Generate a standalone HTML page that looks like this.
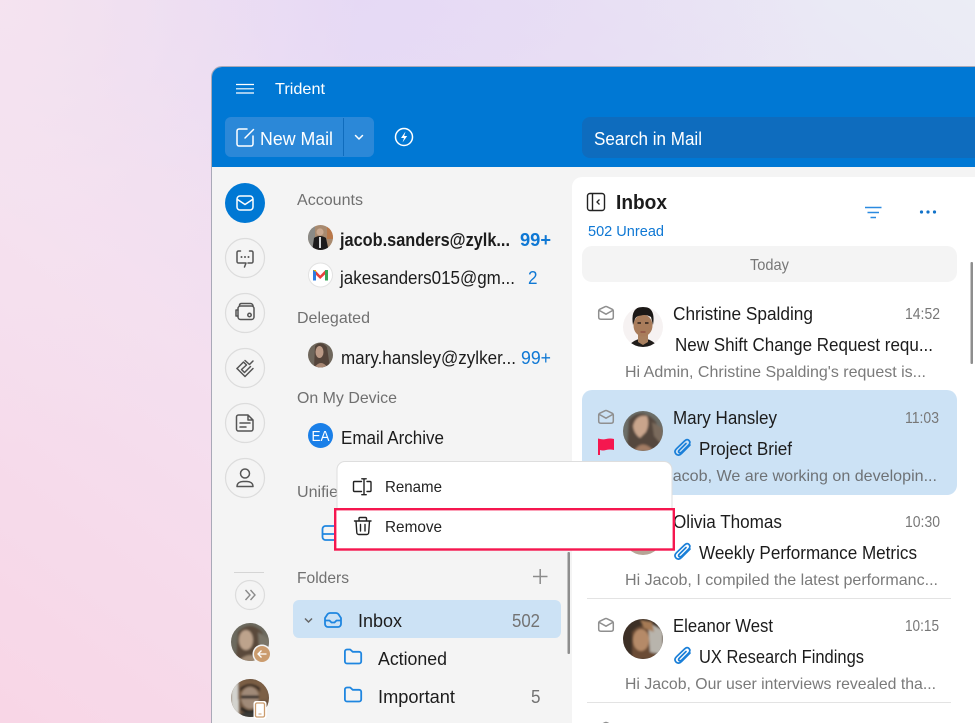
<!DOCTYPE html>
<html lang="en"><head><meta charset="utf-8"><title>Trident</title>
<style>
html,body{margin:0;padding:0;width:975px;height:723px;overflow:hidden;background:#f3e0ee}
svg{display:block}
text{font-family:"Liberation Sans",sans-serif;fill:#1c1c1c;font-size:18px}
.g{fill:#707070;font-size:16px}
.p{fill:#7a7a7a;font-size:16px}
.t{fill:#777;font-size:15.500px}
.b{fill:#0f78d4}
.w{fill:#fff}
.ln{fill:none;stroke:#555;stroke-width:1.500;stroke-linejoin:round;stroke-linecap:round}
.ic{fill:none;stroke:#1f86e0;stroke-width:1.800;stroke-linejoin:round;stroke-linecap:round}
.wh{fill:none;stroke:#fff;stroke-width:1.500;stroke-linejoin:round;stroke-linecap:round}
.k{fill:none;stroke:#222;stroke-width:1.400;stroke-linejoin:round;stroke-linecap:round}
</style></head><body>
<svg xmlns="http://www.w3.org/2000/svg" width="975" height="723" viewBox="0 0 975 723">
<defs>
<linearGradient id="bg" x1="0" y1="1" x2="1" y2="0"><stop offset="0" stop-color="#f8d6e6"/><stop offset=".35" stop-color="#f4dfef"/><stop offset=".62" stop-color="#e8dcf4"/><stop offset="1" stop-color="#ebedf5"/></linearGradient>
<radialGradient id="bg2" cx=".35" cy="0" r=".5"><stop offset="0" stop-color="#e6d9f5"/><stop offset="1" stop-color="#e6d9f5" stop-opacity="0"/></radialGradient>
<radialGradient id="bg3" cx="0" cy="0" r=".9"><stop offset="0" stop-color="#f6e4ef" stop-opacity=".9"/><stop offset="1" stop-color="#f6e4ef" stop-opacity="0"/></radialGradient>
<filter id="bl" x="-30%" y="-30%" width="160%" height="160%"><feGaussianBlur stdDeviation="1"/></filter>
<clipPath id="win"><path d="M212 77a10 10 0 0 1 10-10H975V723H212Z"/></clipPath>
<clipPath id="c1"><circle cx="320.500" cy="237.500" r="12.500"/></clipPath>
<clipPath id="c2"><circle cx="320.500" cy="355" r="12.500"/></clipPath>
<clipPath id="c3"><circle cx="250" cy="642" r="19"/></clipPath>
<clipPath id="c4"><circle cx="250" cy="698" r="19"/></clipPath>
<clipPath id="c5"><circle cx="643" cy="327" r="20"/></clipPath>
<clipPath id="c6"><circle cx="643" cy="431" r="20"/></clipPath>
<clipPath id="c7"><circle cx="643" cy="535" r="20"/></clipPath>
<clipPath id="c8"><circle cx="643" cy="639" r="20"/></clipPath>
<g id="env"><path d="M.7 5.200Q.7 3.900 1.900 3.200L6.600 .9Q8 .2 9.400 .9L14.100 3.200Q15.300 3.900 15.300 5.200V11Q15.300 13.200 13.100 13.200H2.900Q.7 13.200 .7 11Z" fill="none" stroke="#8f8f8f" stroke-width="1.500" stroke-linejoin="round"/><path d="M1.200 4.400L8 8.200L14.800 4.400" fill="none" stroke="#8f8f8f" stroke-width="1.500" stroke-linecap="round" stroke-linejoin="round"/></g>
<g id="clip"><path d="M16 6.500L7.500 15Q4.500 18 2 15.500Q-.3 13 2.500 10.200L10.500 2.500Q13 0 15 2Q17 4.200 14.500 6.700L7.500 13.700Q6 15 5 14Q4 13 5.500 11.500L12 5" fill="none" stroke="#1a7fd8" stroke-width="1.700" stroke-linecap="round" stroke-linejoin="round"/></g>
<g id="fold"><path d="M.9 3A2 2 0 0 1 2.900 1H6.200L8.700 3.300H15.200A2 2 0 0 1 17.200 5.300V13A2 2 0 0 1 15.200 15H2.900A2 2 0 0 1 .9 13Z" fill="none" stroke="#1f86e0" stroke-width="1.800" stroke-linejoin="round"/></g>
</defs>

<rect width="975" height="723" fill="url(#bg)"/>
<rect width="975" height="400" fill="url(#bg2)"/>
<rect width="400" height="500" fill="url(#bg3)"/>

<!-- window -->
<path d="M211.500 723V77a10.500 10.500 0 0 1 10.500-10.500H975" fill="none" stroke="#a9a9b8" stroke-width="1"/>
<g clip-path="url(#win)">
<rect x="212" y="67" width="763" height="100" fill="#0078d4"/>
<rect x="212" y="167" width="763" height="556" fill="#f4f4f4"/>
<rect x="572" y="177" width="420" height="560" rx="10" fill="#fff"/>
</g>

<!-- title bar -->
<path d="M236 84.500H254M236 88.800H254M236 93H254" stroke="#fff" stroke-width="1.200" fill="none"/>
<text class="w" x="275" y="94" style="font-size:16px" textLength="50" lengthAdjust="spacingAndGlyphs">Trident</text>

<!-- new mail -->
<rect x="225" y="117" width="149" height="40" rx="6" fill="#2b88d8"/>
<rect x="343" y="118" width="1" height="38" fill="#0f6cbd"/>
<path d="M247 129H239A2 2 0 0 0 237 131V144A2 2 0 0 0 239 146H251A2 2 0 0 0 253 144V136" class="wh"/>
<path d="M245 138L253.500 129.500" class="wh"/>
<text class="w" x="260" y="145" textLength="73" lengthAdjust="spacingAndGlyphs">New Mail</text>
<path d="M355.500 135.500L359 139L362.500 135.500" class="wh" stroke-width="1.300"/>
<circle cx="404" cy="137" r="8.500" class="wh"/>
<path d="M405.500 131.500L401 138H404L402.500 142.500L407.200 136H404.200Z" fill="#fff"/>

<!-- search -->
<path d="M590 117H975V158H590A8 8 0 0 1 582 150V125A8 8 0 0 1 590 117Z" fill="#0e6cbe"/>
<text class="w" x="594" y="145" textLength="108" lengthAdjust="spacingAndGlyphs">Search in Mail</text>

<!-- rail -->
<circle cx="245" cy="203" r="20" fill="#0078d4"/>
<rect x="237" y="196" width="16" height="14" rx="3" class="wh"/>
<path d="M237.500 199.500L245 204.500L252.500 199.500" class="wh"/>
<g fill="none" stroke="#dcdcdc" stroke-width="1.200">
<circle cx="245" cy="258" r="19.500"/><circle cx="245" cy="313" r="19.500"/><circle cx="245" cy="368" r="19.500"/><circle cx="245" cy="423" r="19.500"/><circle cx="245" cy="478" r="19.500"/>
</g>
<path d="M240.500 251H238.500A1.500 1.500 0 0 0 237 252.500V261.500A1.500 1.500 0 0 0 238.500 263H246L244.500 267M249.500 251H251.500A1.500 1.500 0 0 1 253 252.500V261.500A1.500 1.500 0 0 1 251.500 263H248" class="ln"/>
<circle cx="241.500" cy="257" r="1" fill="#555"/><circle cx="245" cy="257" r="1" fill="#555"/><circle cx="248.500" cy="257" r="1" fill="#555"/>
<rect x="238" y="306" width="16" height="13.500" rx="2.500" class="ln"/>
<path d="M239.500 306V305A2 2 0 0 1 241.500 303.500H250.500A2.500 2.500 0 0 1 253 306M238 310H236V316H238" class="ln"/>
<circle cx="249.500" cy="315" r="1.700" class="ln"/>
<path d="M237 368.500L243.500 362L246.500 365L241.500 369.500L244.500 372.500L250.500 366.500" class="ln"/>
<path d="M245 360.500L249.500 364.500L253 361M237 368.500L245 376.500L253 368.500" class="ln"/>
<path d="M238.500 415H248L253 420V429A2 2 0 0 1 251 431H238.500A2 2 0 0 1 236.500 429V417A2 2 0 0 1 238.500 415ZM248 415V420H253M240 423H250M240 427H246" class="ln"/>
<circle cx="245" cy="473.500" r="4.500" class="ln"/>
<path d="M237 486.500C237 483 240 481.500 243 481.500H247C250 481.500 253 483 253 486.500Z" class="ln"/>
<rect x="234" y="572" width="30" height="1" fill="#d5d5d5"/>
<circle cx="250" cy="595" r="14.500" fill="none" stroke="#dcdcdc" stroke-width="1.200"/>
<path d="M245.500 590L250 595L245.500 600M250.500 590L255 595L250.500 600" fill="none" stroke="#8a8a8a" stroke-width="1.400"/>

<!-- rail avatars -->
<g clip-path="url(#c3)"><rect x="230" y="622" width="40" height="40" fill="#6c6a5f"/><g filter="url(#bl)"><path d="M236 662L238 632Q250 620 262 632L268 660Z" fill="#5a4a3a"/><ellipse cx="246" cy="640" rx="7" ry="10" fill="#bda38c"/><path d="M238 662Q250 648 262 662Z" fill="#a08a74"/><path d="M258 632L270 640V662H260Z" fill="#7a7468"/></g></g>
<circle cx="262" cy="654" r="9.500" fill="#f4f4f4"/><circle cx="262" cy="654" r="8" fill="#cb9c6e"/>
<path d="M266.500 654H258M261.500 650.500L258 654L261.500 657.500" fill="none" stroke="#fff" stroke-width="1.300"/>
<g clip-path="url(#c4)"><rect x="230" y="678" width="40" height="40" fill="#6e5540"/><g filter="url(#bl)"><rect x="231" y="680" width="8" height="38" fill="#d3d3ce"/><path d="M238 680H268V700H238Z" fill="#7c5f44"/><ellipse cx="250" cy="698" rx="9" ry="11" fill="#a08a78"/><path d="M240 692Q250 680 260 692V688Q250 680 240 688Z" fill="#2d2620"/><path d="M241 697H259M241 708Q250 716 259 708" stroke="#2a2520" stroke-width="3" fill="none"/><path d="M234 718Q250 706 266 718Z" fill="#3a3a38"/></g></g>
<rect x="253.500" y="701" width="13" height="18" rx="2.500" fill="#fff"/>
<rect x="255.500" y="703" width="9" height="14" rx="1.500" fill="#fff" stroke="#cb9c6e" stroke-width="1.300"/>
<path d="M258.500 714H261.500" stroke="#cb9c6e" stroke-width="1"/>

<!-- accounts -->
<text class="g" x="297" y="205" textLength="66" lengthAdjust="spacingAndGlyphs">Accounts</text>
<g clip-path="url(#c1)"><rect x="306" y="224" width="30" height="28" fill="#a88a6f"/><rect x="306" y="224" width="9" height="28" fill="#8a8a86"/><rect x="327" y="224" width="9" height="15" fill="#b9784a"/><circle cx="320" cy="232" r="3.600" fill="#c9a88f"/><path d="M312 252L314 238Q320 234 326 238L329 252Z" fill="#1d1b1b"/><path d="M319 237H321L321 248H319Z" fill="#d8d8d8"/></g>
<text x="340" y="246" font-weight="700" textLength="170" lengthAdjust="spacingAndGlyphs">jacob.sanders@zylk...</text>
<text class="b" x="520" y="246" font-weight="700" textLength="31" lengthAdjust="spacingAndGlyphs">99+</text>
<circle cx="320.500" cy="275" r="12" fill="#fff" stroke="#e2e2e2"/>
<path d="M315 270L320.200 275.500L325.500 270V274L320.200 279L315 274Z" fill="#e8413a"/>
<rect x="313" y="270" width="3" height="10.500" fill="#2f7de1"/><rect x="325" y="270" width="3" height="10.500" fill="#3aa757"/><path d="M313 270H316V272L313 270Z" fill="#f2b500"/>
<text x="340" y="284" textLength="175" lengthAdjust="spacingAndGlyphs">jakesanders015@gm...</text>
<text class="b" x="528" y="284" textLength="9.500" lengthAdjust="spacingAndGlyphs">2</text>

<text class="g" x="297" y="323" textLength="73" lengthAdjust="spacingAndGlyphs">Delegated</text>
<g clip-path="url(#c2)"><rect x="306" y="342" width="30" height="26" fill="#6f675c"/><path d="M314 368L315 346Q321 340 327 347L330 368Z" fill="#54443a"/><ellipse cx="319.500" cy="352" rx="4" ry="6" fill="#bb9a86"/><path d="M314 368Q321 358 328 368Z" fill="#a88773"/></g>
<text x="341" y="364" textLength="175" lengthAdjust="spacingAndGlyphs">mary.hansley@zylker...</text>
<text class="b" x="521" y="364" textLength="30" lengthAdjust="spacingAndGlyphs">99+</text>

<text class="g" x="297" y="403" textLength="100" lengthAdjust="spacingAndGlyphs">On My Device</text>
<circle cx="320.500" cy="435.500" r="12.500" fill="#1a7fe8"/>
<text class="w" x="311.500" y="441" style="font-size:15px" textLength="18" lengthAdjust="spacingAndGlyphs">EA</text>
<text x="341" y="444" textLength="103" lengthAdjust="spacingAndGlyphs">Email Archive</text>

<text class="g" x="297" y="497" textLength="50" lengthAdjust="spacingAndGlyphs">Unified</text>
<path d="M322.500 535V529A3 3 0 0 1 325.500 526H345V540H325.500A3 3 0 0 1 322.500 537ZM322.500 534H345" class="ic"/>

<text class="g" x="297" y="583" textLength="52" lengthAdjust="spacingAndGlyphs">Folders</text>
<path d="M533 576.500H547.500M540.200 569V584" stroke="#8c8c8c" stroke-width="1.500" fill="none"/>
<rect x="567.500" y="552" width="2.500" height="102" rx="1" fill="#8e8e8e"/>

<rect x="293" y="600" width="268" height="38" rx="6" fill="#cce2f5"/>
<path d="M305 618.500L308.500 622L312 618.500" fill="none" stroke="#666" stroke-width="1.500"/>
<path d="M325 618V624A3 3 0 0 0 328 627H338A3 3 0 0 0 341 624V618L339 615A3.500 3.500 0 0 0 336 613H330A3.500 3.500 0 0 0 327 615ZM325 620.500H329.500L331.500 622.500H334.500L336.500 620.500H341" class="ic"/>
<text x="358" y="627" textLength="44" lengthAdjust="spacingAndGlyphs">Inbox</text>
<text x="512" y="627" style="fill:#737373" textLength="28" lengthAdjust="spacingAndGlyphs">502</text>
<use href="#fold" x="344" y="648.500"/>
<text x="378" y="665" textLength="69" lengthAdjust="spacingAndGlyphs">Actioned</text>
<use href="#fold" x="344" y="686.500"/>
<text x="378" y="703" textLength="77" lengthAdjust="spacingAndGlyphs">Important</text>
<text x="531" y="703" style="fill:#737373" textLength="9.500" lengthAdjust="spacingAndGlyphs">5</text>

<!-- inbox panel -->
<rect x="587.500" y="193.500" width="17" height="17" rx="2.500" fill="none" stroke="#222" stroke-width="1.400"/>
<path d="M592.500 193.500V210.500" stroke="#222" stroke-width="1.400"/>
<path d="M599.500 199.500L597 202L599.500 204.500" fill="none" stroke="#222" stroke-width="1.300"/>
<text x="616" y="209" font-weight="700" style="font-size:20px" textLength="51" lengthAdjust="spacingAndGlyphs">Inbox</text>
<text class="b" x="588" y="236" style="font-size:15px;fill:#0f78d4" textLength="76" lengthAdjust="spacingAndGlyphs">502 Unread</text>
<path d="M865 207.500H881.500M867.500 212.500H879M870.500 217.500H876" stroke="#2b8ae0" stroke-width="1.600" fill="none"/>
<circle cx="921.500" cy="212" r="1.600" fill="#1373c9"/><circle cx="928" cy="212" r="1.600" fill="#1373c9"/><circle cx="934.500" cy="212" r="1.600" fill="#1373c9"/>
<rect x="582" y="246" width="375" height="36" rx="10" fill="#f4f4f4"/>
<text class="t" x="750" y="270" style="font-size:16px" textLength="39" lengthAdjust="spacingAndGlyphs">Today</text>
<rect x="970.500" y="262" width="2.500" height="102" rx="1" fill="#8e8e8e"/>

<!-- message 1 -->
<use href="#env" x="598" y="306"/>
<circle cx="643" cy="327" r="20" fill="#f6f2f2"/>
<g clip-path="url(#c5)"><path d="M627 347Q634 340 639 339L647 339Q652 340 659 347Z" fill="#201c1a"/><path d="M638 334H648V342L643 345L638 342Z" fill="#a9805f"/><ellipse cx="643" cy="325.500" rx="9.500" ry="11" fill="#a97c5b"/><path d="M633 325Q630 307 643 306.500Q656 307 653 325L651 317Q646 314 641 315.500Q636 316 635 319Z" fill="#1c1816"/><path d="M637.500 323H641M645 323H648.500" stroke="#2a1f1a" stroke-width="1.500"/><path d="M640.500 332H645.500" stroke="#8c4a40" stroke-width="1.300"/></g>
<text x="673" y="320" textLength="140" lengthAdjust="spacingAndGlyphs">Christine Spalding</text>
<text class="t" x="905" y="319" textLength="35" lengthAdjust="spacingAndGlyphs">14:52</text>
<text x="675" y="351" textLength="258" lengthAdjust="spacingAndGlyphs">New Shift Change Request requ...</text>
<text class="p" x="625" y="377" textLength="301" lengthAdjust="spacingAndGlyphs">Hi Admin, Christine Spalding's request is...</text>

<!-- message 2 -->
<rect x="582" y="390" width="375" height="105" rx="10" fill="#cce2f5"/>
<use href="#env" x="598" y="410"/>
<path d="M598 438.500Q603 440 606 439Q610 438 614 439V450Q610 449 606 450Q603 451 600 450V455H598Z" fill="#f5174f"/>
<g clip-path="url(#c6)"><rect x="623" y="411" width="40" height="40" fill="#6c6e68"/><g filter="url(#bl)"><path d="M627 451L629 420Q642 406 656 422L662 451Z" fill="#54463c"/><path d="M633 426Q636 414 647 416Q650 424 646 432L640 438Q634 434 633 426Z" fill="#c9a58c"/><path d="M634 451Q642 438 654 451Z" fill="#a27c63"/><path d="M652 422L662 428V445L654 436Z" fill="#7a6a5c"/></g></g>
<text x="673" y="424" textLength="104" lengthAdjust="spacingAndGlyphs">Mary Hansley</text>
<text class="t" x="905" y="423" textLength="34" lengthAdjust="spacingAndGlyphs">11:03</text>
<use href="#clip" x="674" y="438.500"/>
<text x="699" y="455" textLength="93" lengthAdjust="spacingAndGlyphs">Project Brief</text>
<text class="p" x="645" y="481" style="fill:#6e7276" textLength="292" lengthAdjust="spacingAndGlyphs">Hi Jacob, We are working on developin...</text>

<!-- message 3 -->
<use href="#env" x="598" y="514"/>
<g clip-path="url(#c7)"><rect x="623" y="515" width="40" height="40" fill="#b6a596"/></g>
<text x="673" y="528" textLength="109" lengthAdjust="spacingAndGlyphs">Olivia Thomas</text>
<text class="t" x="905" y="527" textLength="35" lengthAdjust="spacingAndGlyphs">10:30</text>
<use href="#clip" x="674" y="542.500"/>
<text x="699" y="559" textLength="218" lengthAdjust="spacingAndGlyphs">Weekly Performance Metrics</text>
<text class="p" x="625" y="585" textLength="313" lengthAdjust="spacingAndGlyphs">Hi Jacob, I compiled the latest performanc...</text>
<rect x="587" y="598" width="364" height="1" fill="#e3e3e3"/>

<!-- message 4 -->
<use href="#env" x="598" y="618"/>
<g clip-path="url(#c8)"><rect x="623" y="619" width="40" height="40" fill="#3d3026"/><g filter="url(#bl)"><path d="M632 659L632 632Q640 622 652 628L656 659Z" fill="#6a4c35"/><ellipse cx="641" cy="640" rx="8" ry="11" fill="#b58a68"/><path d="M648 622L663 630V655L650 652Z" fill="#b8b4ac"/><path d="M640 620L652 622L654 632L644 628Z" fill="#a57a55"/></g></g>
<text x="673" y="632" textLength="100" lengthAdjust="spacingAndGlyphs">Eleanor West</text>
<text class="t" x="905" y="631" textLength="34" lengthAdjust="spacingAndGlyphs">10:15</text>
<use href="#clip" x="674" y="646.500"/>
<text x="699" y="663" textLength="165" lengthAdjust="spacingAndGlyphs">UX Research Findings</text>
<text class="p" x="625" y="689" textLength="311" lengthAdjust="spacingAndGlyphs">Hi Jacob, Our user interviews revealed tha...</text>
<rect x="587" y="702" width="364" height="1" fill="#e3e3e3"/>
<!-- message 5 peek -->
<use href="#env" x="598" y="722"/>

<!-- context menu -->
<rect x="337" y="461.500" width="335" height="88" rx="8" fill="#fff" stroke="#dedede" stroke-width="1"/>
<path d="M361.500 481.500H354.500A1 1 0 0 0 353.500 482.500V490.500A1 1 0 0 0 354.500 491.500H361.500M367 481.500H370A1 1 0 0 1 371 482.500V490.500A1 1 0 0 1 370 491.500H367M364 479V494.500M361.800 478.800H366.200M361.800 494.700H366.200" class="k"/>
<text x="385" y="492" style="font-size:16px;fill:#222" textLength="57" lengthAdjust="spacingAndGlyphs">Rename</text>
<rect x="335.200" y="509.200" width="338.600" height="40.300" fill="#fff" stroke="#f5174f" stroke-width="2.400"/>
<path d="M354.500 521H371M359 521V518.300A1 1 0 0 1 360 517.500H365.500A1 1 0 0 1 366.500 518.300V521M356 521L356.800 532.500A2 2 0 0 0 358.800 534.500H366.700A2 2 0 0 0 368.700 532.500L369.500 521M360.500 524.500V531M365 524.500V531" class="k"/>
<text x="385" y="532" style="font-size:16px;fill:#222" textLength="57" lengthAdjust="spacingAndGlyphs">Remove</text>
</svg>
</body></html>
